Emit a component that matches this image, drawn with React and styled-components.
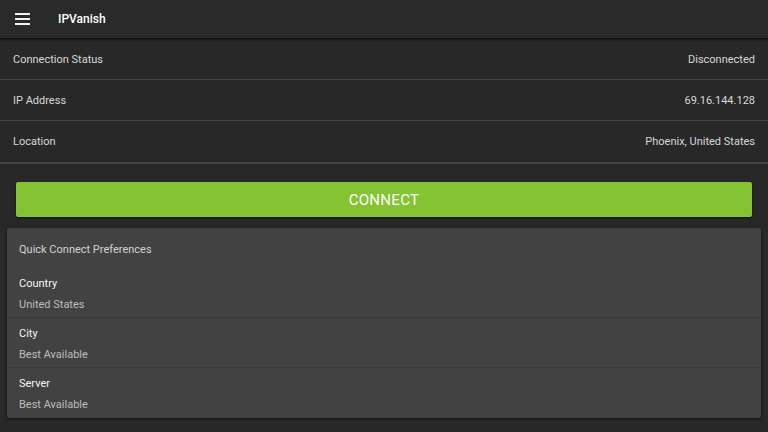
import React from 'react';
import styled, {createGlobalStyle} from 'styled-components';

const Global = createGlobalStyle`
    html, body {
        margin: 0;
        padding: 0;
        background: #282828;
        font-family: Roboto, "Liberation Sans", sans-serif;
    }
`

const Page = styled.div`
    width: 768px;
    height: 432px;
    background: #282828;
    display: flex;
    flex-direction: column;
    overflow: hidden;
`

const TopBar = styled.header`
    height: 38px;
    flex-shrink: 0;
    background: #2a2a2a;
    display: flex;
    align-items: center;
    box-shadow: 0 2px 2px rgba(0,0,0,0.55);
    position: relative;
    z-index: 1;
`

const Burger = styled.div`
    width: 15px;
    height: 12px;
    margin-left: 15px;
    display: flex;
    flex-direction: column;
    justify-content: space-between;
    span {
        display: block;
        height: 2px;
        background: #f2f2f2;
    }
`

const Title = styled.h1`
    margin: 0 0 0 28px;
    font-size: 12px;
    font-weight: 500;
    color: #ffffff;
`

const InfoList = styled.div`
    display: flex;
    flex-direction: column;
    margin-top: 1px;
`

const InfoRow = styled.div`
    height: ${(props) => props.last ? '41px' : '40px'};
    display: flex;
    align-items: center;
    justify-content: space-between;
    padding: 0 13px;
    border-bottom: ${(props) => props.last ? '2px solid #444' : '1px solid #444'};
    font-size: 11px;
    color: #d8d8d8;
`

const ConnectButton = styled.button`
    margin: 18px 16px 0 16px;
    height: 35px;
    flex-shrink: 0;
    background: #85c332;
    border: none;
    border-radius: 2px;
    box-shadow: 0 1px 2px rgba(0,0,0,0.7);
    color: #ffffff;
    font-family: Roboto, "Liberation Sans", sans-serif;
    font-size: 15px;
    letter-spacing: 0.3px;
`

const Card = styled.section`
    margin: 11px 7px 0 7px;
    background: #424242;
    border-radius: 2px;
    box-shadow: 0 1px 3px rgba(0,0,0,0.6);
    padding-top: 13px;
    padding-bottom: 1px;
`

const CardTitle = styled.div`
    padding: 0 12px;
    font-size: 11px;
    color: #d2d2d2;
    height: 17px;
    line-height: 17px;
    margin-bottom: 10px;
`

const Pref = styled.div`
    padding: 8px 12px 5px 12px;
    border-top: ${(props) => props.first ? 'none' : '1px solid #383838'};
    display: flex;
    flex-direction: column;
    gap: 6px;
`

const PrefLabel = styled.div`
    font-size: 11px;
    line-height: 15px;
    color: #f5f5f5;
`

const PrefValue = styled.div`
    font-size: 11px;
    line-height: 15px;
    color: #bdbdbd;
`

const info = [
    ['Connection Status', 'Disconnected'],
    ['IP Address', '69.16.144.128'],
    ['Location', 'Phoenix, United States'],
]

const prefs = [
    ['Country', 'United States'],
    ['City', 'Best Available'],
    ['Server', 'Best Available'],
]

const App = () => {
    return (
        <>
            <Global />
            <Page>
                <TopBar>
                    <Burger><span /><span /><span /></Burger>
                    <Title>IPVanish</Title>
                </TopBar>
                <InfoList>
                    {info.map(([k, v], i) => (
                        <InfoRow key={k} last={i === info.length - 1}>
                            <span>{k}</span>
                            <span>{v}</span>
                        </InfoRow>
                    ))}
                </InfoList>
                <ConnectButton>CONNECT</ConnectButton>
                <Card>
                    <CardTitle>Quick Connect Preferences</CardTitle>
                    {prefs.map(([k, v], i) => (
                        <Pref key={k} first={i === 0}>
                            <PrefLabel>{k}</PrefLabel>
                            <PrefValue>{v}</PrefValue>
                        </Pref>
                    ))}
                </Card>
            </Page>
        </>
    )
}

export default App;
